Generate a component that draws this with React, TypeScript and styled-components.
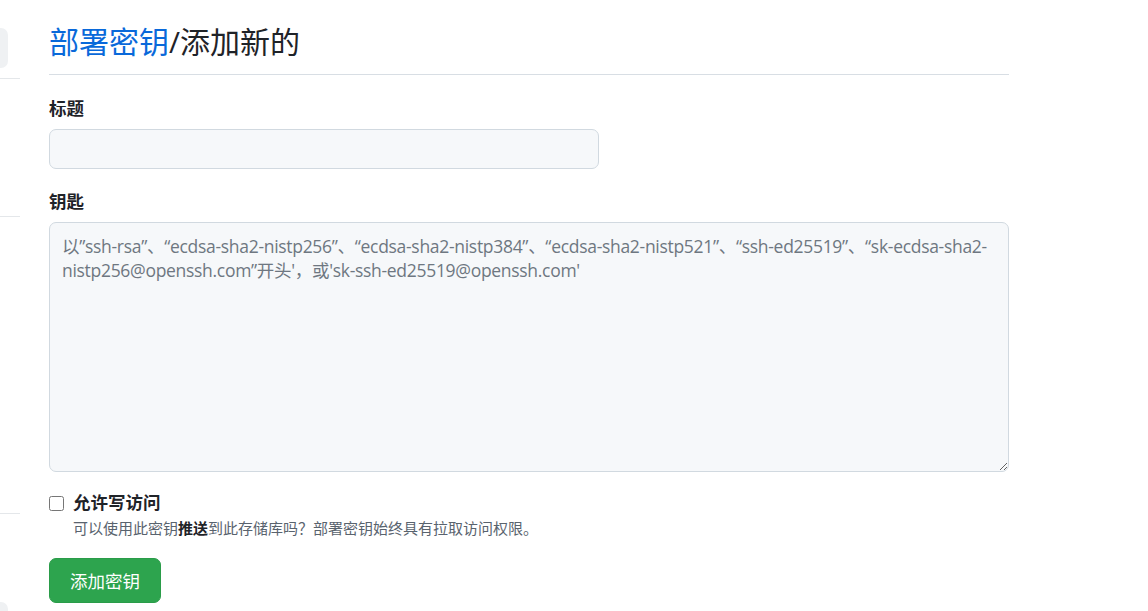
import React from 'react';
import styled, { createGlobalStyle } from 'styled-components';

const GlobalStyle = createGlobalStyle`
    html, body {
        margin: 0;
        padding: 0;
        background: #ffffff;
        color: #1f2328;
        font-family: "Open Sans", "Noto Sans CJK SC", sans-serif;
        font-size: 17.5px;
    }
`;

function App() {
    return (
        <Page>
            <GlobalStyle />
            <SideBarStyled>
                <SideBlock />
                <SideLine $top={10} />
                <SideLine $top={137} />
                <SideLine $top={296} />
                <SideBlock $top={88} />
            </SideBarStyled>
            <MainStyled>
                <Subhead>
                    <h1><a href="#keys">部署密钥</a>/添加新的</h1>
                </Subhead>
                <form onSubmit={(e) => e.preventDefault()}>
                    <FieldGroup $gap={20}>
                        <Label htmlFor="title">标题</Label>
                        <TitleInput id="title" type="text" />
                    </FieldGroup>
                    <FieldGroup $gap={18}>
                        <Label htmlFor="key">钥匙</Label>
                        <KeyArea
                            id="key"
                            placeholder={"以”ssh-rsa”、“ecdsa-sha2-nistp256”、“ecdsa-sha2-nistp384”、“ecdsa-sha2-nistp521”、“ssh-ed25519”、“sk-ecdsa-sha2-nistp256@openssh.com”开头'，或'sk-ssh-ed25519@openssh.com'"}
                        />
                    </FieldGroup>
                    <CheckRow>
                        <input type="checkbox" id="write" />
                        <div>
                            <CheckLabel htmlFor="write">允许写访问</CheckLabel>
                            <Note>可以使用此密钥<strong>推送</strong>到此存储库吗？部署密钥始终具有拉取访问权限。</Note>
                        </div>
                    </CheckRow>
                    <BtnGreen type="submit">添加密钥</BtnGreen>
                </form>
            </MainStyled>
        </Page>
    );
}

const Page = styled.div`
    display: flex;
    flex-direction: row;
    min-height: 611px;
    overflow: hidden;
`;

const SideBarStyled = styled.aside`
    display: flex;
    flex-direction: column;
    width: 20px;
    flex-shrink: 0;
    padding-top: 28px;
`;

const SideBlock = styled.div<{ $top?: number }>`
    width: 8px;
    height: 40px;
    margin-top: ${(p) => p.$top ?? 0}px;
    background: #eff1f3;
    border-radius: 0 7px 7px 0;
`;

const SideLine = styled.div<{ $top: number }>`
    height: 1px;
    width: 20px;
    margin-top: ${(p) => p.$top}px;
    background: #e4e7ea;
`;

const MainStyled = styled.main`
    width: 960px;
    margin-left: 29px;
`;

const Subhead = styled.div`
    padding-top: 22px;
    padding-bottom: 12px;
    border-bottom: 1px solid #d8dee4;
    margin-bottom: 21px;
    h1 {
        margin: 0;
        font-size: 30px;
        font-weight: 400;
        line-height: 40px;
        a {
            color: #0969da;
            text-decoration: none;
        }
    }
`;

const FieldGroup = styled.div<{ $gap: number }>`
    display: flex;
    flex-direction: column;
    margin-bottom: ${(p) => p.$gap}px;
`;

const Label = styled.label`
    font-weight: 700;
    line-height: 25px;
    margin-bottom: 8px;
`;

const TitleInput = styled.input`
    box-sizing: border-box;
    width: 550px;
    height: 40px;
    padding: 6px 15px;
    font: inherit;
    color: #1f2328;
    background: #f6f8fa;
    border: 1px solid #d1d9e0;
    border-radius: 7px;
    outline: none;
`;

const KeyArea = styled.textarea`
    box-sizing: border-box;
    width: 960px;
    height: 250px;
    padding: 11px 12px;
    font: inherit;
    font-size: 17.5px;
    line-height: 24px;
    letter-spacing: -0.3px;
    color: #1f2328;
    background: #f6f8fa;
    border: 1px solid #d1d9e0;
    border-radius: 7px;
    outline: none;
    &::placeholder {
        color: #6e7781;
    }
`;

const CheckRow = styled.div`
    display: flex;
    flex-direction: row;
    align-items: flex-start;
    gap: 9px;
    input {
        width: 15px;
        height: 15px;
        margin: 6px 0 0 0;
    }
`;

const CheckLabel = styled.label`
    display: block;
    font-weight: 700;
    line-height: 25px;
`;

const Note = styled.p`
    margin: 3px 0 0;
    font-size: 15px;
    line-height: 21px;
    color: #59636e;
    strong {
        color: #1f2328;
        font-weight: 700;
    }
`;

const BtnGreen = styled.button`
    margin-top: 19px;
    height: 45px;
    padding: 0 20px;
    font: inherit;
    color: #ffffff;
    background: #2da44e;
    border: 1px solid #2a9c49;
    border-radius: 7px;
    cursor: pointer;
`;

export default App;
